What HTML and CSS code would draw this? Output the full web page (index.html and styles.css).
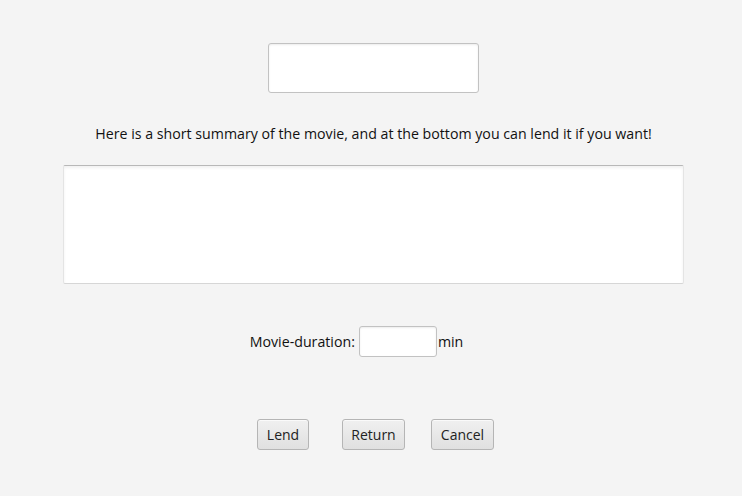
FILE: index.html
```html
<!DOCTYPE html>
<html>
<head>
<meta charset="utf-8">
<link rel="stylesheet" href="styles.css">
</head>
<body>
<div class="page">
  <div class="title-field"></div>
  <p class="summary-label">Here is a short summary of the movie, and at the bottom you can lend it if you want!</p>
  <div class="summary-area"></div>
  <div class="duration-row">
    <span class="lbl">Movie-duration:</span>
    <div class="duration-field"></div>
    <span class="lbl">min</span>
  </div>
  <div class="buttons">
    <button class="btn btn-lend">Lend</button>
    <button class="btn btn-return">Return</button>
    <button class="btn btn-cancel">Cancel</button>
  </div>
</div>
</body>
</html>
```
FILE: styles.css
```css
html, body {
  margin: 0;
  padding: 0;
  background: #f4f4f4;
  font-family: "Open Sans", "Noto Sans", sans-serif;
  font-size: 14.2px;
  color: #111;
}
.page {
  width: 742px;
  height: 496px;
  box-sizing: border-box;
  padding-left: 5px;
  display: flex;
  flex-direction: column;
  align-items: center;
}
.title-field {
  margin-top: 43px;
  width: 209px;
  height: 48px;
  background: #fff;
  border: 1px solid #c2c2c2;
  border-radius: 3px;
  box-shadow: inset 0 1px 2px rgba(0,0,0,0.08);
}
.summary-label {
  margin: 31px 0 0;
  height: 20px;
  line-height: 20px;
}
.summary-area {
  margin-top: 21px;
  width: 621px;
  background: #fff;
  border-top: 1px solid #b8b8b8;
  border-left: 1px solid #e4e4e4;
  border-right: 1px solid #e4e4e4;
  border-bottom: 1px solid #d6d6d6;
  box-sizing: border-box;
  height: 119px;
  border-radius: 2px;
  box-shadow: inset 0 2px 3px rgba(0,0,0,0.06);
}
.duration-row {
  margin-top: 42px;
  margin-right: 34px;
  display: flex;
  align-items: center;
  height: 31px;
}
.lbl {
  line-height: 20px;
}
.duration-field {
  margin: 0 1px 0 4px;
  width: 76px;
  height: 29px;
  background: #fff;
  border: 1px solid #c2c2c2;
  border-radius: 3px;
  box-shadow: inset 0 1px 2px rgba(0,0,0,0.08);
}
.buttons {
  margin-top: 62px;
  display: flex;
  gap: 33px;
  margin-left: 4px;
}
.btn {
  font-family: inherit;
  font-size: 14px;
  color: #222;
  height: 31px;
  padding: 0 4px;
  border: 1px solid #b5b5b5;
  border-radius: 3px;
  background: linear-gradient(#f0f0f0, #e0e0e0);
  box-shadow: inset 0 1px 0 #fafafa;
}
.btn-lend { width: 52px; }
.btn-return { width: 63px; }
.btn-cancel { width: 63px; margin-left: -7px; }
```
